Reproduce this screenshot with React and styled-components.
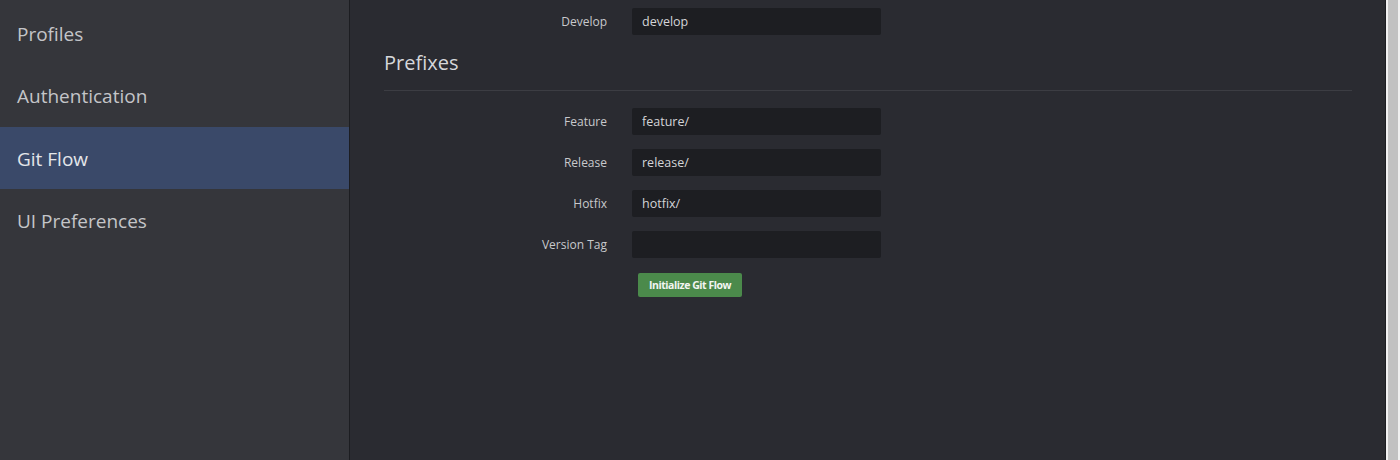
import styled, { createGlobalStyle } from "styled-components";

const GlobalStyle = createGlobalStyle`
  html, body {
    margin: 0;
    padding: 0;
    height: 100%;
    background: #2a2b31;
    font-family: "Open Sans", "Noto Sans", sans-serif;
  }
  #root {
    height: 100%;
  }
`;

const menu = ["Profiles", "Authentication", "Git Flow", "UI Preferences"];

const prefixes = [
  { label: "Feature", value: "feature/" },
  { label: "Release", value: "release/" },
  { label: "Hotfix", value: "hotfix/" },
  { label: "Version Tag", value: "" },
];

const App = () => {
  return (
    <>
      <GlobalStyle />
      <Page>
        <Sidebar>
          {menu.map((item) => (
            <MenuItem key={item} $active={item === "Git Flow"}>
              {item}
            </MenuItem>
          ))}
        </Sidebar>
        <Main>
          <Form>
            <Label>Develop</Label>
            <Input defaultValue="develop" />
          </Form>
          <Heading>Prefixes</Heading>
          <Form>
            {prefixes.map((p) => (
              <Row key={p.label}>
                <Label>{p.label}</Label>
                <Input defaultValue={p.value} />
              </Row>
            ))}
            <span />
            <Button>Initialize Git Flow</Button>
          </Form>
        </Main>
        <Scrollbar>
          <Thumb />
        </Scrollbar>
      </Page>
    </>
  );
};

export default App;

const Page = styled.div`
  display: flex;
  height: 460px;
  overflow: hidden;
`;

const Sidebar = styled.nav`
  width: 349px;
  flex-shrink: 0;
  background: #35363b;
  border-right: 1px solid #1c1d21;
  padding-top: 2px;
  box-sizing: content-box;
`;

const MenuItem = styled.div`
  height: 62px;
  box-sizing: border-box;
  display: flex;
  align-items: center;
  padding-left: 17px;
  padding-top: 1px;
  font-size: 19px;
  color: ${(p) => (p.$active ? "#e4e6ea" : "#c4c5c8")};
  background: ${(p) => (p.$active ? "#3a4969" : "transparent")};

  &:nth-child(3) {
    margin-top: 1px;
  }
`;

const Main = styled.main`
  flex: 1;
  background: #2a2b31;
  padding: 8px 33px 0 34px;
`;

const Form = styled.div`
  display: grid;
  grid-template-columns: 223px 249px;
  column-gap: 25px;
  row-gap: 14px;
  align-items: center;
`;

const Row = styled.div`
  display: contents;
`;

const Label = styled.label`
  text-align: right;
  font-size: 12px;
  color: #c8c9cc;
`;

const Input = styled.input`
  height: 27px;
  box-sizing: border-box;
  border: none;
  border-radius: 2px;
  background: #1d1e22;
  color: #d4d5d8;
  font-family: "Open Sans", "Noto Sans", sans-serif;
  font-size: 12.5px;
  padding: 0 10px;
  outline: none;
`;

const Heading = styled.h2`
  margin: 14px 0 17px;
  padding-bottom: 13px;
  border-bottom: 1px solid #3c3d43;
  font-size: 20px;
  font-weight: 400;
  line-height: 28px;
  color: #d6d7da;
`;

const Button = styled.button`
  justify-self: start;
  margin-left: 6px;
  margin-top: 1px;
  height: 24px;
  padding: 0 11px;
  border: none;
  border-radius: 2px;
  background: #4b8a4b;
  color: #f2f5f2;
  font-family: "Open Sans", "Noto Sans", sans-serif;
  font-size: 10.5px;
  letter-spacing: -0.45px;
  font-weight: 700;
`;

const Scrollbar = styled.div`
  width: 15px;
  box-sizing: border-box;
  flex-shrink: 0;
  background: #f1f1f1;
  border-left: 1px solid #1c1d21;
  display: flex;
  padding: 0 2px;
`;

const Thumb = styled.div`
  flex: 1;
  background: #c1c1c1;
`;
